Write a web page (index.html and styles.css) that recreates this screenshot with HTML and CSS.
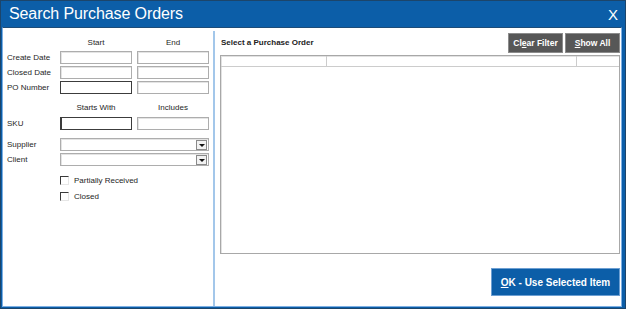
FILE: index.html
```html
<!DOCTYPE html>
<html lang="en">
<head>
    <meta charset="UTF-8">
    <meta name="viewport" content="width=device-width, initial-scale=1.0">
    <title>Search Purchase Orders</title>
    <link rel="stylesheet" href="styles.css">
</head>
<body>
    <div class="window">
        <div class="titlebar">
            <span class="title">Search Purchase Orders</span>
            <span class="close">X</span>
        </div>
        <div class="content">
            <!-- Фильтры -->
            <div class="filters">
                <div class="row heads"><span></span><span>Start</span><span>End</span></div>
                <div class="row">
                    <label>Create Date</label>
                    <input type="text" class="box">
                    <input type="text" class="box">
                </div>
                <div class="row">
                    <label>Closed Date</label>
                    <input type="text" class="box">
                    <input type="text" class="box">
                </div>
                <div class="row">
                    <label>PO Number</label>
                    <input type="text" class="box box-dark">
                    <input type="text" class="box">
                </div>
                <div class="row heads heads-sku"><span></span><span>Starts With</span><span>Includes</span></div>
                <div class="row">
                    <label>SKU</label>
                    <input type="text" class="box box-dark box-caret">
                    <input type="text" class="box">
                </div>
                <div class="row row-supplier">
                    <label>Supplier</label>
                    <div class="combo"><span class="combo-text"></span><span class="drop"></span></div>
                </div>
                <div class="row">
                    <label>Client</label>
                    <div class="combo"><span class="combo-text"></span><span class="drop"></span></div>
                </div>
                <div class="row row-check first-check">
                    <span></span>
                    <div class="check-item"><span class="check"></span>Partially Received</div>
                </div>
                <div class="row row-check">
                    <span></span>
                    <div class="check-item"><span class="check"></span>Closed</div>
                </div>
            </div>

            <!-- Результаты -->
            <div class="results">
                <div class="results-top">
                    <span class="results-title">Select a Purchase Order</span>
                    <div class="tools">
                        <button class="btn-gray">Cl<u>e</u>ar Filter</button>
                        <button class="btn-gray"><u>S</u>how All</button>
                    </div>
                </div>
                <div class="grid">
                    <div class="grid-head">
                        <span class="col col-1"></span>
                        <span class="col col-2"></span>
                        <span class="col col-3"></span>
                    </div>
                </div>
                <div class="footer">
                    <button class="btn-ok"><u>O</u>K - Use Selected Item</button>
                </div>
            </div>
        </div>
    </div>
</body>
</html>
```

FILE: styles.css
```css
* {
    box-sizing: border-box;
    font-family: 'Liberation Sans', Arial, sans-serif;
}

body {
    margin: 0;
    background: #ffffff;
}

.window {
    width: 626px;
    height: 309px;
    display: flex;
    flex-direction: column;
    background-color: #0c5ea8;
    border: 1px solid #1c456b;
    padding: 0 3px 1px 1px;
}

.titlebar {
    height: 26px;
    display: flex;
    align-items: center;
    justify-content: space-between;
    padding: 0 4px 0 7px;
    color: #ffffff;
}

.title {
    font-size: 16px;
    letter-spacing: -0.1px;
}

.close {
    font-size: 15px;
    margin-top: 1px;
}

.content {
    flex: 1;
    display: flex;
    background-color: #ffffff;
    border: 1px solid #7fb0e2;
    border-top-color: #1d4c78;
}

/* Левая панель */
.filters {
    width: 212px;
    flex-shrink: 0;
    margin-top: 3px;
    padding-left: 4px;
    border-right: 2px solid #a3c7ea;
    display: flex;
    flex-direction: column;
    font-size: 8px;
    color: #1e1e1e;
}

.row {
    display: grid;
    grid-template-columns: 48px 72px 72px;
    column-gap: 5px;
    align-items: center;
    height: 13px;
    margin-top: 2px;
}

.heads {
    height: 11px;
    margin-top: 6px;
    text-align: center;
}

.heads + .row {
    margin-top: 3px;
}

.heads-sku {
    margin-top: 8px;
}

.heads-sku + .row {
    margin-top: 4px;
}

.row-supplier {
    margin-top: 8px;
}

label {
    white-space: nowrap;
}

.box {
    width: 72px;
    height: 13px;
    padding: 0;
    margin: 0;
    border: 1px solid #adadad;
    box-shadow: inset 1px 1px 0 #e4e4e4;
    background: #ffffff;
    outline: none;
}

.box-dark {
    border-color: #3c3c3c;
    box-shadow: none;
}

.box-caret {
    border-left-width: 2px;
}

.combo {
    grid-column: span 2;
    height: 13px;
    display: flex;
    align-items: center;
    border: 1px solid #adadad;
    box-shadow: inset 1px 1px 0 #e4e4e4;
    padding-right: 1px;
}

.combo-text {
    flex: 1;
}

.drop {
    width: 11px;
    height: 10px;
    border: 1px solid #8a8a8a;
    background: #f2f2f2;
    display: flex;
    align-items: center;
    justify-content: center;
}

.drop::after {
    content: "";
    border-left: 3px solid transparent;
    border-right: 3px solid transparent;
    border-top: 3px solid #111111;
    margin-top: 1px;
}

.row-check {
    height: 10px;
    margin-top: 6px;
}

.first-check {
    margin-top: 9px;
}

.check-item {
    grid-column: span 2;
    display: flex;
    align-items: center;
    white-space: nowrap;
}

.check {
    width: 9px;
    height: 9px;
    margin-right: 5px;
    border-top: 1px solid #3a3a3a;
    border-left: 1px solid #3a3a3a;
    border-right: 1px solid #e6e6e6;
    border-bottom: 1px solid #e6e6e6;
}

/* Правая панель */
.results {
    flex: 1;
    display: flex;
    flex-direction: column;
    padding: 5px 1px 0 5px;
}

.results-top {
    height: 20px;
    display: flex;
    align-items: center;
    justify-content: space-between;
}

.results-title {
    font-size: 8px;
    font-weight: bold;
    color: #222222;
    padding-left: 1px;
    margin-top: -1px;
}

.tools {
    display: flex;
    gap: 2px;
}

.btn-gray {
    width: 55px;
    height: 20px;
    padding: 0;
    background-color: #575757;
    border: 1px solid #8c8c8c;
    color: #ffffff;
    font-size: 8.5px;
    font-weight: bold;
}

.grid {
    margin-top: 2px;
    height: 199px;
    border: 1px solid #a8a8a8;
    box-shadow: inset 1px 1px 0 #e2e2e2;
}

.grid-head {
    height: 11px;
    display: flex;
    border-bottom: 1px solid #cccccc;
}

.col {
    height: 100%;
}

.col-1 {
    width: 106px;
    border-right: 1px solid #cccccc;
}

.col-2 {
    width: 250px;
    border-right: 1px solid #cccccc;
}

.col-3 {
    flex: 1;
}

.footer {
    display: flex;
    justify-content: flex-end;
    margin-top: 14px;
}

.btn-ok {
    width: 129px;
    height: 28px;
    padding: 0;
    background-color: #0c5ea8;
    border: 1px solid #6d9fd2;
    color: #ffffff;
    font-size: 10px;
    font-weight: bold;
}
```
